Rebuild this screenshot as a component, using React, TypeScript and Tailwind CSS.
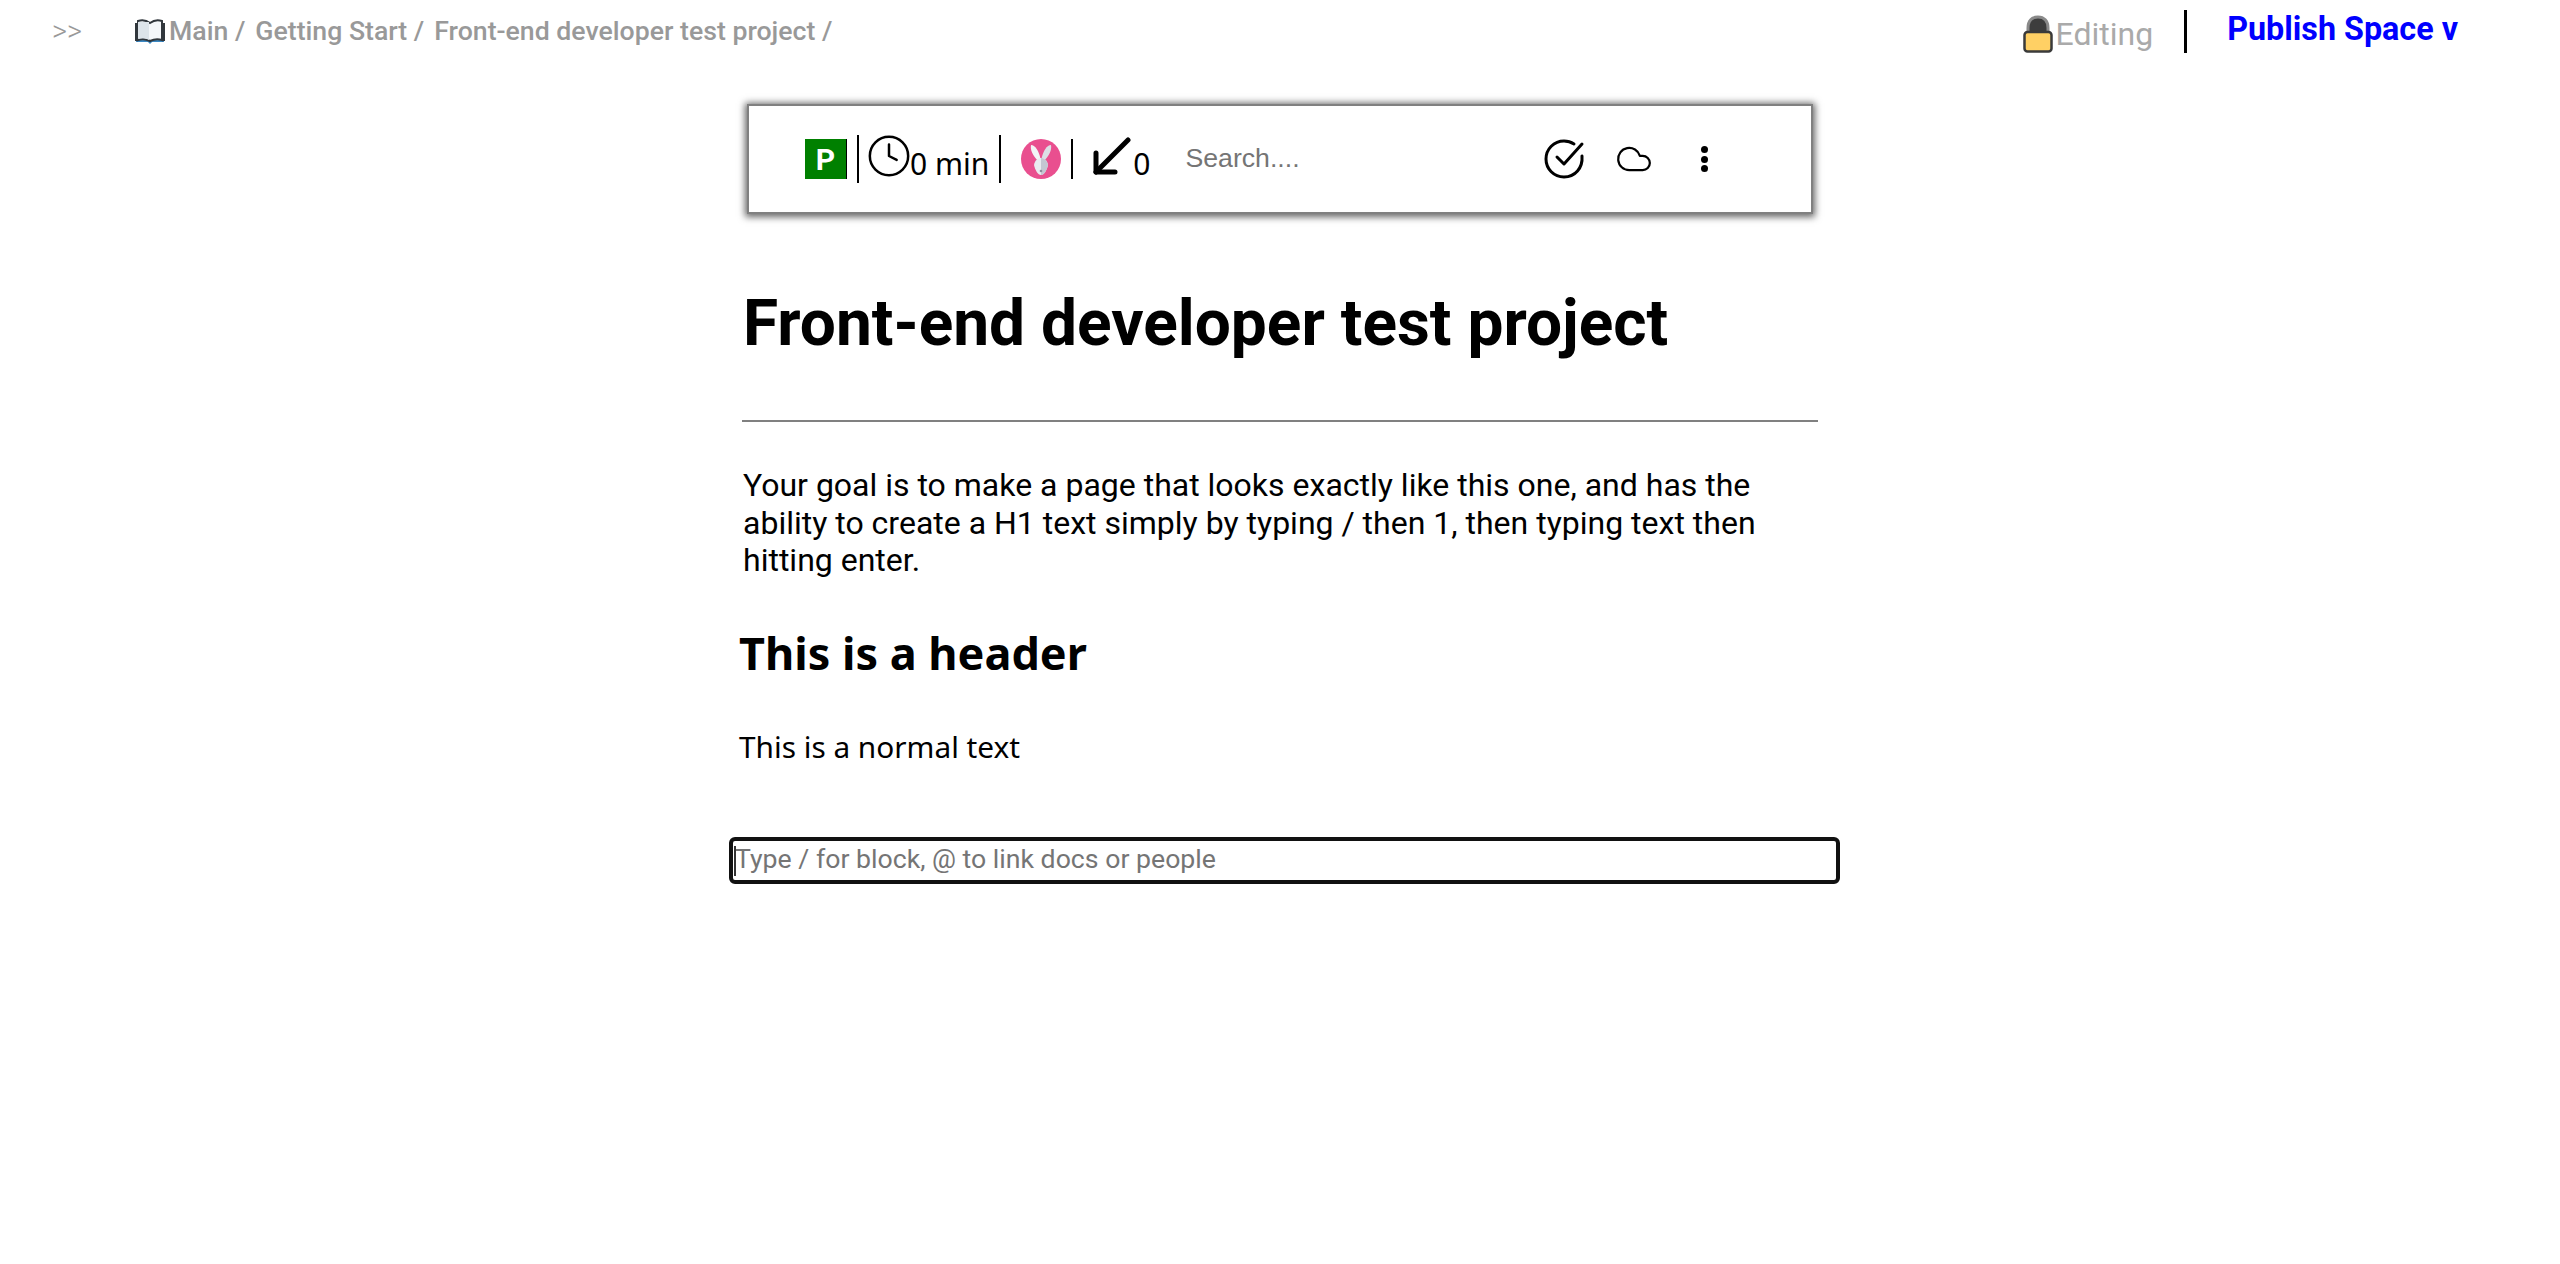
import { Clock, Cloud } from "lucide-react";

const BookIcon = () => (
  <svg width={30} height={25} viewBox="0 0 30 25">
    <path d="M1 5 V23 H13 L15 25 L17 23 H29 V5 Z" fill="#3b88c3" />
    <path d="M15 4 C11 1 6 1 3 2 V21 C6 20 11 20 15 22 C19 20 24 20 27 21 V2 C24 1 19 1 15 4Z" fill="#f4f7fa" stroke="#31373d" strokeWidth="2" />
    <path d="M3 3 H14 V21 C11 19 6 19 3 20Z" fill="#dde4ea" />
    <path d="M1 4 V22" stroke="#31373d" strokeWidth="2" />
    <path d="M29 4 V22" stroke="#31373d" strokeWidth="2" />
  </svg>
);

const LockIcon = () => (
  <svg width={30} height={38} viewBox="0 0 30 38">
    <path d="M5 18 V13 C5 6 9 2 15 2 C21 2 25 6 25 13 V18" fill="#3d3d3d" stroke="#8a8a8a" strokeWidth="3" />
    <rect x="1.5" y="17" width="27" height="19.5" rx="3" fill="#ffd064" stroke="#3a3a3a" strokeWidth="2.5" />
  </svg>
);

const RabbitIcon = () => (
  <svg width={40} height={40} viewBox="0 0 40 40">
    <circle cx="20" cy="20" r="20" fill="#e94f8f" />
    <path d="M17 22 C12 17 9 11 10 6 C14 6 18 12 19.5 20 Z" fill="#f2f3f6" />
    <path d="M23 22 C28 17 31 11 30 6 C26 6 22 12 20.5 20 Z" fill="#dcdee5" />
    <path d="M13 26 C14 21 17 19 20 19 C23 19 26 21 27 26 C26 31 23 36 20 36 C17 36 14 31 13 26Z" fill="#e9ebf0" />
    <path d="M20 19 C23 19 26 21 27 26 C26 31 23 36 20 36Z" fill="#c4c7d2" />
    <circle cx="20" cy="32" r="1.3" fill="#8c8f9b" />
  </svg>
);

const CheckCircle = () => (
  <svg width={41} height={40} viewBox="0 0 41 40" fill="none" stroke="#000" strokeWidth="3" strokeLinecap="round" strokeLinejoin="round">
    <path d="M38 17 C39 29 31 38 20 38 C10 38 2 30 2 20 C2 10 10 2 20 2 C24 2 27 3 30 5" />
    <path d="M13 18 L20 25 L38 5" />
  </svg>
);

const ArrowIcon = () => (
  <svg width={38} height={38} viewBox="0 0 38 38" fill="none" stroke="#000" strokeWidth="5" strokeLinecap="round" strokeLinejoin="round">
    <path d="M3 35 L35 3" />
    <path d="M3 16 V35 H22" />
  </svg>
);

const Dots = () => (
  <div className="flex h-[26px] w-[7px] flex-col justify-between">
    <div className="size-[7px] rounded-full bg-black" />
    <div className="size-[7px] rounded-full bg-black" />
    <div className="size-[7px] rounded-full bg-black" />
  </div>
);

const Divider = ({ tall }: { tall?: boolean }) => (
  <div className={tall ? "h-12 w-0.5 bg-black" : "h-10 w-0.5 bg-black"} />
);

const App = () => {
  return (
    <div className="min-h-[1264px] bg-white font-['Roboto',sans-serif] text-black">
      <header className="flex h-[64px] items-start justify-between pl-[52px] pr-[102px]">
        <div className="flex items-center pt-[15px] text-[26.67px] font-medium leading-[32px] text-[#999999]">
          <span className="w-[83px] text-[29px] font-light">&gt;&gt;</span>
          <BookIcon />
          <span className="ml-[4px]">Main /</span>
          <span className="ml-[10px]">Getting Start /</span>
          <span className="ml-[10px]">Front-end developer test project /</span>
        </div>
        <div className="flex items-start">
          <div className="flex items-center pt-[15px]">
            <LockIcon />
            <span className="ml-[3px] text-[32px] leading-[38px] text-[#aaaaaa]">Editing</span>
          </div>
          <div className="ml-[31px] mt-[10px] h-[43px] w-[3px] bg-black" />
          <span className="ml-[40px] mt-[10px] text-[32.3px] font-bold leading-[38px] text-[#0000ff]">Publish Space v</span>
        </div>
      </header>

      <main className="ml-[729px] w-[1111px]">
        <div className="ml-[18px] mt-[40px] flex h-[110px] w-[1066px] items-center border-2 border-[#808080] pl-[56px] shadow-[0_1px_7px_2px_rgba(0,0,0,0.6)]">
          <div className="flex h-10 w-[42px] items-center justify-center border-r border-black bg-[#008000] text-[30px] font-bold text-white">P</div>
          <div className="ml-[10px]"><Divider tall /></div>
          <Clock size={46} strokeWidth={1.3} className="ml-[7px] -translate-y-[3px]" />
          <span className="ml-[-2px] translate-y-[5px] font-['Noto_Sans',sans-serif] text-[30px] leading-[38px]">0 min</span>
          <div className="ml-[10px]"><Divider tall /></div>
          <div className="ml-[20px]"><RabbitIcon /></div>
          <div className="ml-[10px]"><Divider /></div>
          <div className="ml-[20px] -translate-y-[3px]"><ArrowIcon /></div>
          <span className="ml-[2px] translate-y-[5px] font-['Noto_Sans',sans-serif] text-[30px] leading-[38px]">0</span>
          <input
            placeholder="Search...."
            className="ml-[35px] w-[320px] bg-transparent font-['Liberation_Sans',sans-serif] text-[26.67px] outline-none placeholder:text-[#757575]"
          />
          <div className="ml-[39px]"><CheckCircle /></div>
          <Cloud size={38} strokeWidth={1.4} className="ml-[30px]" />
          <div className="ml-[48px]"><Dots /></div>
        </div>

        <h1 className="ml-[14px] mt-[72px] text-[64px] font-bold leading-[75px]">Front-end developer test project</h1>
        <hr className="ml-[13px] mt-[59px] w-[1076px] border-t-2 border-[#808080]" />
        <p className="ml-[14px] mt-[45px] w-[1060px] text-[32px] leading-[37.5px]">
          Your goal is to make a page that looks exactly like this one, and has the ability to create a H1 text simply by typing / then 1, then typing text then hitting enter.
        </p>
        <h2 className="ml-[10px] mt-[43px] font-['Noto_Sans',sans-serif] text-[45px] font-bold leading-[60px]">This is a header</h2>
        <p className="ml-[10px] mt-[44px] font-['Noto_Sans',sans-serif] text-[29.8px] leading-[40px]">This is a normal text</p>
        <div className="relative mt-[70px] flex h-[47px] items-center rounded-md border-4 border-[#111111] pl-[2px]">
          <div className="absolute left-[1px] top-[5px] h-[30px] w-0.5 bg-[#333333]" />
          <input
            placeholder="Type / for block, @ to link docs or people"
            className="w-full bg-transparent text-[26.67px] outline-none placeholder:text-[#757575]"
          />
        </div>
      </main>
    </div>
  );
};

export default App;
